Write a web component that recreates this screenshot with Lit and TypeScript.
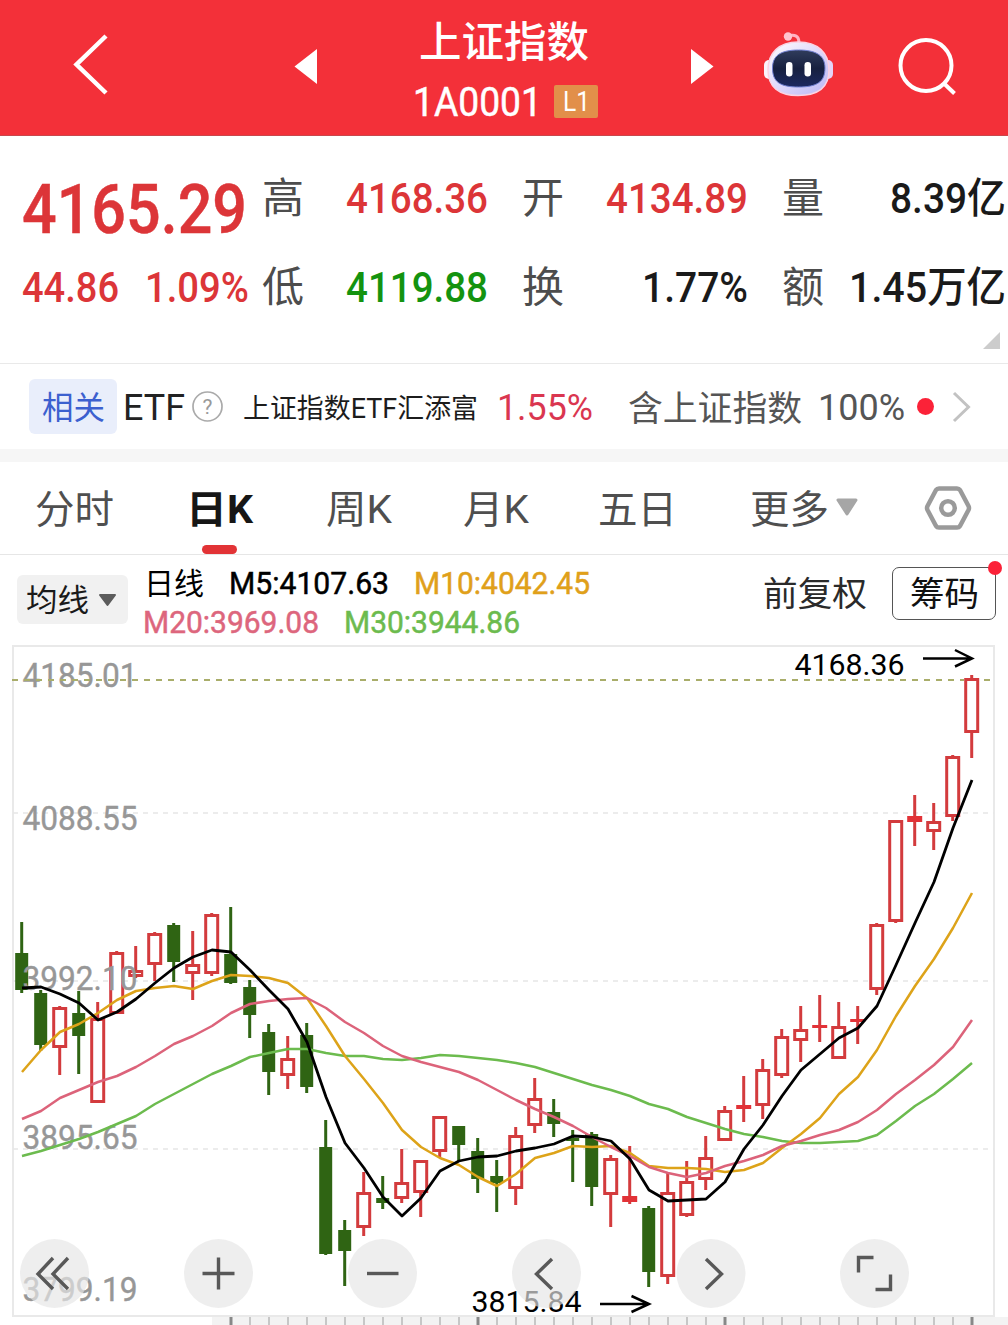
import { LitElement, html, svg, css } from "lit";
import { customElement } from "lit/decorators.js";

/** One line of text set to an exact advance width, vertically centred on its capitals. */
const label = (text: string, width: number, size: number, cls = "") => html`
  <svg class="label ${cls}" width=${width} height=${size}>
    <text y=${size * 0.856} font-size=${size} textLength=${width} lengthAdjust="spacingAndGlyphs">${text}</text>
  </svg>`;

type Candle = [high: number, top: number, bottom: number, low: number, up: 0 | 1];

const CANDLES: Candle[] = [
  [922, 953, 990, 993, 0], [990, 993, 1045, 1051, 0], [1006, 1007, 1048, 1075, 1], [991, 1013, 1036, 1074, 0],
  [1002, 1018, 1103, 1103, 1], [951, 952, 1014, 1014, 1], [946, 970, 977, 978, 1], [932, 933, 965, 981, 1],
  [923, 925, 962, 982, 0], [931, 964, 974, 1000, 1], [913, 914, 974, 976, 1], [907, 954, 983, 984, 0],
  [980, 987, 1015, 1038, 0], [1024, 1032, 1072, 1095, 0], [1036, 1058, 1076, 1089, 1], [1023, 1035, 1087, 1093, 0],
  [1120, 1147, 1254, 1255, 0], [1220, 1230, 1251, 1286, 0], [1172, 1192, 1228, 1236, 1], [1176, 1198, 1203, 1209, 0],
  [1149, 1182, 1199, 1203, 1], [1160, 1160, 1193, 1217, 1], [1116, 1116, 1152, 1157, 1], [1126, 1126, 1145, 1162, 0],
  [1138, 1151, 1179, 1193, 0], [1160, 1176, 1183, 1212, 0], [1127, 1135, 1189, 1205, 1], [1078, 1098, 1126, 1133, 1],
  [1099, 1112, 1124, 1137, 0], [1130, 1138, 1141, 1182, 0], [1132, 1134, 1187, 1206, 0], [1155, 1158, 1195, 1227, 1],
  [1146, 1196, 1202, 1204, 1], [1206, 1208, 1272, 1287, 0], [1173, 1192, 1277, 1284, 1], [1161, 1181, 1216, 1217, 1],
  [1136, 1157, 1180, 1190, 1], [1106, 1110, 1141, 1141, 1], [1076, 1105, 1109, 1122, 1], [1059, 1069, 1106, 1119, 1],
  [1029, 1036, 1076, 1078, 1], [1006, 1029, 1041, 1062, 1], [995, 1025, 1028, 1042, 1], [1002, 1026, 1059, 1059, 1],
  [1006, 1019, 1022, 1044, 1], [923, 924, 990, 995, 1], [820, 820, 922, 923, 1], [795, 816, 822, 846, 1],
  [803, 821, 832, 850, 1], [755, 756, 817, 821, 1], [675, 678, 733, 758, 1],
];

const AVERAGES: { cls: string; ys: number[] }[] = [
  { cls: "m30", ys: [1156, 1151, 1145, 1139, 1132, 1124, 1116, 1104, 1094, 1084, 1074, 1066, 1057, 1053, 1049, 1049, 1053, 1056, 1056, 1059, 1060, 1058, 1055, 1056, 1058, 1060, 1063, 1067, 1073, 1079, 1085, 1090, 1096, 1104, 1109, 1117, 1123, 1129, 1134, 1137, 1141, 1143, 1143, 1142, 1141, 1135, 1121, 1106, 1094, 1079, 1063] },
  { cls: "m10", ys: [1072, 1050, 1032, 1024, 1013, 1000, 991, 988, 986, 989, 981, 975, 976, 978, 983, 998, 1026, 1056, 1079, 1103, 1130, 1147, 1158, 1165, 1177, 1186, 1174, 1158, 1153, 1146, 1147, 1146, 1153, 1166, 1168, 1168, 1169, 1172, 1170, 1163, 1148, 1134, 1118, 1094, 1077, 1050, 1016, 986, 959, 928, 893] },
  { cls: "m20", ys: [1119, 1111, 1098, 1090, 1082, 1076, 1067, 1056, 1044, 1036, 1026, 1013, 1004, 1001, 999, 998, 1008, 1022, 1033, 1046, 1056, 1062, 1067, 1072, 1080, 1090, 1100, 1109, 1117, 1126, 1137, 1147, 1156, 1167, 1173, 1177, 1173, 1166, 1161, 1155, 1146, 1141, 1135, 1130, 1122, 1110, 1094, 1080, 1065, 1047, 1020] },
  { cls: "m5", ys: [988, 987, 994, 1003, 1020, 1012, 999, 983, 968, 957, 950, 952, 970, 990, 1009, 1042, 1097, 1143, 1168, 1197, 1216, 1198, 1171, 1161, 1157, 1156, 1151, 1148, 1144, 1136, 1137, 1141, 1159, 1190, 1201, 1200, 1199, 1182, 1149, 1125, 1096, 1070, 1054, 1038, 1028, 1006, 965, 923, 882, 828, 780] },
];

const AXIS: [string, number][] = [["4185.01", 687], ["4088.55", 830], ["3992.10", 990], ["3895.65", 1149], ["3799.19", 1301]];

const CONTROLS: [number, string][] = [
  [54.5, "M53 1258 38 1274 53 1289M68 1258 53 1274 68 1289"],
  [218.5, "M202.5 1273.5H234.5M218.5 1257.5V1289.5"],
  [382.5, "M367 1273.5H398.5"],
  [546.5, "M552 1259 536.5 1274 552 1289"],
  [711, "M706 1259 721.5 1274 706 1289"],
  [874.5, "M873.5 1257.5H858.5V1272.5M890.5 1274.5V1289.5H875.5"],
];

const slotX = (i: number) => 21.7 + 19 * i;

@customElement("kline-chart")
export class KlineChart extends LitElement {
  static styles = css`
    :host { display: block; height: 680px; }
    svg { display: block; font-family: Roboto, "Noto Sans CJK SC", sans-serif; }
    .frame { fill: none; stroke: #e9e9e9; stroke-width: 2; }
    .grid { stroke: #e6e6e6; stroke-width: 1.5; stroke-dasharray: 5 5; }
    .current { stroke: #a9ad6a; stroke-width: 2; stroke-dasharray: 6 6; }
    .strip { fill: #f3f3f3; }
    .tick { stroke: #b8b8b8; stroke-width: 1.5; }
    .tick.major { stroke: #888; stroke-width: 3; }
    .up { stroke: #d33b3d; stroke-width: 3; fill: #fff; }
    .up.flat { fill: #e23237; stroke: none; }
    .down { fill: #2f6413; }
    .wick-down { stroke: #2f6413; stroke-width: 3; }
    .axis { fill: #979797; stroke: #979797; stroke-width: 0.4; font-size: 34px; font-weight: 400; }
    .mark { fill: #000; font-size: 30px; font-weight: 400; }
    .arrow { fill: none; stroke: #000; stroke-width: 2.5; }
    .average { fill: none; stroke-width: 2.5; stroke-linejoin: round; }
    .m5 { stroke: #000; stroke-width: 2.8; }
    .m10 { stroke: #dda319; }
    .m20 { stroke: #dc637a; }
    .m30 { stroke: #6cbb4e; }
    .disc { fill: rgba(230, 230, 230, 0.67); }
    .glyph { fill: none; stroke: #585858; stroke-width: 3.4; }
  `;

  private candle([high, top, bottom, low, up]: Candle, i: number) {
    const x = slotX(i);
    if (!up) {
      return svg`<line class="wick-down" x1=${x} x2=${x} y1=${high} y2=${low}/>
        <rect class="down" x=${x - 6.5} y=${top} width="13" height=${bottom - top}/>`;
    }
    const wick = svg`<line class="up" x1=${x} x2=${x} y1=${high} y2=${low}/>`;
    return bottom - top < 7
      ? svg`${wick}<rect class="up flat" x=${x - 7.5} y=${top} width="15" height=${bottom - top}/>`
      : svg`${wick}<rect class="up" x=${x - 6} y=${top + 1.5} width="12" height=${bottom - top - 3}/>`;
  }

  render() {
    const ticks = Array.from({ length: 40 }, (_, i) => i);
    return html`<svg width="1008" height="680" viewBox="0 645 1008 680">
      <rect class="strip" x="212" y="1317" width="796" height="8"/>
      ${ticks.map((i) => svg`<line class="tick ${i % 13 === 0 ? "major" : ""}" x1=${231 + 19 * i} x2=${231 + 19 * i} y1="1317" y2="1325"/>`)}
      <rect class="frame" x="13" y="646" width="981" height="670"/>
      ${[813, 981, 1149].map((y) => svg`<line class="grid" x1="13" x2="994" y1=${y} y2=${y}/>`)}
      ${CANDLES.map((c, i) => this.candle(c, i))}
      ${AXIS.map(([t, y]) => svg`<text class="axis" x="22.5" y=${y} textLength="115" lengthAdjust="spacingAndGlyphs">${t}</text>`)}
      <line class="current" x1="12" x2="964" y1="680" y2="680"/>
      <line class="current" x1="984" x2="991" y1="680" y2="680"/>
      ${AVERAGES.map(({ cls, ys }) => svg`<polyline class="average ${cls}" points=${ys.map((y, i) => `${slotX(i) + 0.3},${y}`).join(" ")}/>`)}
      <text class="mark" x="794.5" y="675" textLength="110" lengthAdjust="spacingAndGlyphs">4168.36</text>
      <path class="arrow" d="M923 658.5H971M955 650 972 658.5 955 666.5"/>
      <text class="mark" x="471.5" y="1311.5" textLength="110" lengthAdjust="spacingAndGlyphs">3815.84</text>
      <path class="arrow" d="M600 1304H648M631.500 1296 649 1304 631.500 1312"/>
      ${CONTROLS.map(([x, d]) => svg`<circle class="disc" cx=${x} cy="1273.5" r="34.5"/><path class="glyph" d=${d}/>`)}
    </svg>`;
  }
}

@customElement("app-root")
export class AppRoot extends LitElement {
  static styles = css`
    :host { display: block; width: 1008px; height: 1325px; overflow: hidden; background: #fff; font-family: Roboto, "Noto Sans CJK SC", sans-serif; }
    * { box-sizing: border-box; }
    svg { display: block; flex: none; }
    .label { overflow: visible; fill: currentColor; }
    .sturdy { stroke: currentColor; stroke-width: 0.5; }
    .medium { font-weight: 500; }
    .bold { font-weight: 700; }

    .header { display: flex; height: 136px; padding-left: 72px; background: #f33039; color: #fff; border-bottom: 1px solid #c9474c; }
    .previous { margin-left: 184px; }
    .heading { width: 200px; margin-left: 87px; padding-top: 21px; display: flex; flex-direction: column; align-items: center; gap: 18px; }
    .code { display: flex; align-items: center; gap: 12px; margin-left: 3px; }
    .level { width: 44px; height: 33px; border-radius: 2px; background: #e28f4a; display: grid; place-items: center; }
    .next { margin-left: 87px; }
    .robot { margin-left: 48px; }
    .search { margin-left: 63px; }

    .quote { position: relative; height: 228px; padding-top: 17px; display: grid; grid-template-columns: 262px 260px 260px 226px; grid-template-rows: 89px 89px; align-items: center; border-bottom: 1px solid #e9e9e9; color: #1a1a1a; }
    .price { padding: 22px 0 0 22px; }
    .change { padding: 1px 0 0 22px; display: flex; gap: 26px; }
    .cell { display: flex; align-items: center; justify-content: space-between; padding-right: 34px; }
    .cell:nth-child(4n) { padding-right: 2px; }
    .name { color: #4d4d4d; }
    .red { color: #dc3538; }
    .green { color: #14930f; }
    .corner { position: absolute; left: 983px; top: 196px; }

    .related { display: flex; align-items: center; height: 85px; padding-left: 29px; }
    .tag { width: 88px; height: 55px; padding-top: 2px; border-radius: 6px; background: #e9eefb; color: #3c60cf; display: grid; place-items: center; }
    .etf { margin-left: 6px; color: #222; }
    .help { margin-left: 7px; }
    .fund { margin: 3px 0 0 20px; color: #1c1c1c; }
    .gain { margin-left: 19px; color: #da3650; }
    .holds { margin: 3px 0 0 35px; color: #555; }
    .share { margin-left: 16px; color: #555; }
    .dot { width: 17px; height: 17px; margin-left: 12px; border-radius: 50%; background: #fb2238; }
    .more { margin-left: 18px; }
    .band { height: 13px; background: #f6f6f6; }

    .tabs { display: flex; height: 93px; padding: 0 0 0 35px; border-bottom: 1px solid #e6e6e6; color: #4f4f4f; }
    .tab { height: 92px; display: flex; flex-direction: column; align-items: center; justify-content: space-between; padding-top: 28px; }
    .tab.active { color: #161616; }
    .underline { width: 35px; height: 9px; border-radius: 5px; background: #e23336; }
    .day { margin-left: 72px; }
    .week { margin-left: 73px; }
    .month { margin-left: 71px; }
    .five { margin-left: 69px; }
    .extra { margin-left: 73px; }
    .caret { margin-left: 7px; }
    .settings { margin-left: 65px; }

    .toolbar { display: flex; height: 90px; padding-left: 17px; }
    .selector { width: 111px; height: 49px; margin-top: 20px; padding-left: 9px; border-radius: 6px; background: #f1f1f1; color: #1a1a1a; display: flex; align-items: center; gap: 9px; }
    .legend { width: 620px; padding: 12px 0 0 15px; display: flex; flex-direction: column; gap: 7px; }
    .values { display: flex; align-items: center; gap: 25px; height: 32px; }
    .first { padding-left: 1px; }
    .m5 { color: #000; }
    .m10 { color: #e0a01a; }
    .m20 { color: #dd667d; }
    .m30 { color: #6cbb4e; }
    .adjust { margin: 22px 0 0 15px; color: #2a2a2a; }
    .chips { position: relative; width: 104px; height: 53px; margin: 12px 0 0 25px; padding-top: 1px; border: 1.5px solid #555; border-radius: 7px; color: #111; display: grid; place-items: center; }
    .badge { position: absolute; width: 14px; height: 14px; right: -7px; top: -7px; border-radius: 50%; background: #fb2238; }
  `;

  private cell(name: string, value: string, width: number, tone = "") {
    return html`<div class="cell"><span class="name">${label(name, 42, 42)}</span><span class=${tone}>${label(value, width, 42, "medium")}</span></div>`;
  }

  private tab(text: string, cls: string, width: number, active = false) {
    return html`<div class="tab ${cls} ${active ? "active" : ""}">
      ${label(text, width, 39, active ? "bold" : "")}
      ${active ? html`<span class="underline"></span>` : ""}
    </div>`;
  }

  render() {
    return html`
      <div class="header">
        <svg width="38" height="136" viewBox="72 0 38 136"><path d="M106 36 76.500 64.500 106 93" fill="none" stroke="#fff" stroke-width="4.500"/></svg>
        <svg class="previous" width="23" height="136" viewBox="294 0 23 136"><path d="M294.500 66.500 317 49V84Z" fill="#fff"/></svg>
        <div class="heading">
          ${label("上证指数", 170, 42, "medium")}
          <div class="code">${label("1A0001", 129, 41, "sturdy")}<span class="level">${label("L1", 27, 27)}</span></div>
        </div>
        <svg class="next" width="24" height="136" viewBox="691 0 24 136"><path d="M713.500 66.500 691 49V84Z" fill="#fff"/></svg>
        <svg class="robot" width="72" height="136" viewBox="763 0 72 136">
          <defs>
            <linearGradient id="shell" x1="0" y1="0" x2="1" y2="1"><stop offset="0" stop-color="#fff"/><stop offset=".45" stop-color="#e3dcfb"/><stop offset="1" stop-color="#b9b6f4"/></linearGradient>
            <linearGradient id="visor" x1="0" y1="0" x2="0" y2="1"><stop offset="0" stop-color="#303c5c"/><stop offset=".5" stop-color="#17203f"/><stop offset="1" stop-color="#1c2860"/></linearGradient>
          </defs>
          <path d="M788 36C795 34 799 36 799 43" fill="none" stroke="#ffb3c3" stroke-width="3"/>
          <circle cx="788" cy="36.500" r="4.200" fill="#ffc3cf"/>
          <rect x="764" y="60" width="10" height="19" rx="5" fill="#fbf3fb"/>
          <rect x="823" y="60" width="10" height="19" rx="5" fill="#e4d4f8"/>
          <path d="M798 42C818 42 829 53 829 70C829 87 818 95.500 798 95.500C779 95.500 768 87 768 70C768 53 779 42 798 42Z" fill="url(#shell)" stroke="#fbd3e3" stroke-width="1.500"/>
          <path d="M798.500 50C817 50 825 56 825 68C825 82 817 87 798.500 87C780 87 772.500 82 772.500 68C772.500 56 780 50 798.500 50Z" fill="url(#visor)" stroke="#6f7fd0" stroke-width="1"/>
          <rect x="786" y="62" width="6.500" height="14.500" rx="3.200" fill="#fff"/>
          <rect x="804.500" y="62" width="6.500" height="14.500" rx="3.200" fill="#fff"/>
        </svg>
        <svg class="search" width="60" height="136" viewBox="898 0 60 136"><g fill="none" stroke="#fff" stroke-width="4"><circle cx="926" cy="65.500" r="25.500"/><path d="M943.500 83 954.500 93.500"/></g></svg>
      </div>

      <div class="quote">
        <div class="price red">${label("4165.29", 225, 69, "medium sturdy")}</div>
        ${this.cell("高", "4168.36", 142, "red")}
        ${this.cell("开", "4134.89", 142, "red")}
        ${this.cell("量", "8.39亿", 116)}
        <div class="change red">${label("44.86", 97, 42, "medium")}${label("1.09%", 104, 42, "medium")}</div>
        ${this.cell("低", "4119.88", 142, "green")}
        ${this.cell("换", "1.77%", 106)}
        ${this.cell("额", "1.45万亿", 157)}
        <svg class="corner" width="17" height="17"><path d="M17 0V17H0Z" fill="#ccc"/></svg>
      </div>

      <div class="related">
        <span class="tag">${label("相关", 63, 32)}</span>
        <span class="etf">${label("ETF", 62, 36)}</span>
        <svg class="help" width="31" height="31"><circle cx="15.500" cy="15.500" r="14.500" fill="none" stroke="#aaa" stroke-width="1.700"/><text x="15.500" y="23" text-anchor="middle" font-size="21" fill="#999">?</text></svg>
        <span class="fund">${label("上证指数ETF汇添富", 235, 27)}</span>
        <span class="gain">${label("1.55%", 96, 37)}</span>
        <span class="holds">${label("含上证指数", 174, 35)}</span>
        <span class="share">${label("100%", 87, 37)}</span>
        <span class="dot"></span>
        <svg class="more" width="20" height="32"><path d="M2 2 16.500 16 2 30" fill="none" stroke="#c2c2c2" stroke-width="3"/></svg>
      </div>
      <div class="band"></div>

      <div class="tabs">
        ${this.tab("分时", "", 79)}
        ${this.tab("日K", "day", 67, true)}
        ${this.tab("周K", "week", 66)}
        ${this.tab("月K", "month", 66)}
        ${this.tab("五日", "five", 79)}
        ${this.tab("更多", "extra", 79)}
        <svg class="caret" width="22" height="92" viewBox="838 462 22 92"><path d="M840 500H858L849 514Z" fill="#a6a6a6" stroke="#a6a6a6" stroke-width="3" stroke-linejoin="round"/></svg>
        <svg class="settings" width="50" height="92" viewBox="925 462 50 92"><g fill="none" stroke="#9a9a9a" stroke-width="4.500" stroke-linejoin="round"><path d="M941 488.500H959Q961 488.500 962 490L970.500 506Q971.500 508 970.500 510L962 526Q961 527.500 959 527.500H941Q939 527.500 938 526L929.500 510Q928.500 508 929.500 506L938 490Q939 488.500 941 488.500Z"/><circle cx="950" cy="508" r="6.800"/></g></svg>
      </div>

      <div class="toolbar">
        <div class="selector">${label("均线", 63, 31)}<svg width="20" height="14"><path d="M2 2H17L9.500 12Z" fill="#5c5c5c" stroke="#5c5c5c" stroke-width="2" stroke-linejoin="round"/></svg></div>
        <div class="legend">
          <div class="values first">${label("日线", 60, 30, "m5")}${label("M5:4107.63", 160, 32, "m5 sturdy")}${label("M10:4042.45", 176, 32, "m10 sturdy")}</div>
          <div class="values">${label("M20:3969.08", 176, 32, "m20 sturdy")}${label("M30:3944.86", 176, 32, "m30 sturdy")}</div>
        </div>
        <div class="adjust">${label("前复权", 104, 34)}</div>
        <div class="chips">${label("筹码", 69, 34)}<span class="badge"></span></div>
      </div>

      <kline-chart></kline-chart>
    `;
  }
}
